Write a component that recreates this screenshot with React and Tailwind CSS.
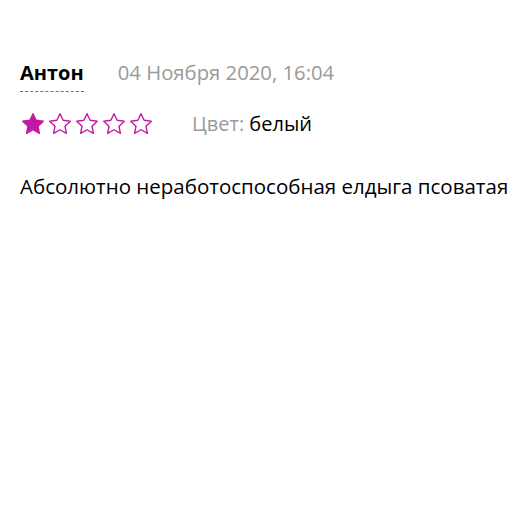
export default function App() {
  const rating = 1
  return (
    <div className="min-h-screen bg-white px-5 pt-[56px] font-['Open_Sans',sans-serif]">
      <div className="flex items-baseline gap-[34px]">
        <span className="text-[20px] font-bold text-black border-b border-dashed border-gray-500 leading-[34px] pb-[1px]">
          Антон
        </span>
        <span className="text-[20.3px] text-[#9a9a9a]">04 Ноября 2020, 16:04</span>
      </div>
      <div className="mt-[17px] flex items-center">
        <div className="flex gap-[1px]">
          {[1, 2, 3, 4, 5].map(i => (
            <svg key={i} width="26" height="26" viewBox="0 0 24 24">
              <path
                d="M12 2.5l2.9 6.1 6.6.8-4.9 4.6 1.3 6.6L12 17.3l-5.9 3.3 1.3-6.6-4.9-4.6 6.6-.8z"
                fill={i <= rating ? '#c01aa4' : 'none'}
                stroke="#c01aa4"
                strokeWidth="1.3"
                strokeLinejoin="round"
              />
            </svg>
          ))}
        </div>
        <span className="ml-[38px] text-[20px] text-[#9a9a9a]">
          Цвет: <span className="text-black">белый</span>
        </span>
      </div>
      <p className="mt-[32px] whitespace-nowrap text-[20.5px] text-black">
        Абсолютно неработоспособная елдыга псоватая
      </p>
    </div>
  )
}
